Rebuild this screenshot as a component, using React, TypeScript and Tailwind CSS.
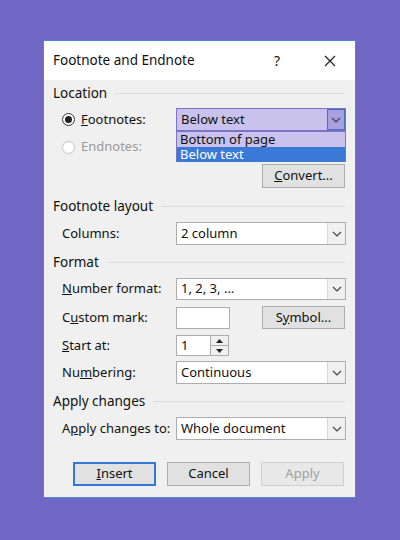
import React from 'react';

const font = { fontFamily: '"Noto Sans", "Open Sans", sans-serif' };

function Chevron() {
  return (
    <svg width="10" height="6" viewBox="0 0 10 6" fill="none" stroke="#444" strokeWidth="1.2">
      <path d="M1 1l4 4 4-4" />
    </svg>
  );
}

function Select({ value, active }: { value: string; active?: boolean }) {
  return (
    <div
      className={`w-[170px] shrink-0 h-full flex items-center border ${
        active ? 'bg-[#c9c2ec] border-[#7e72c8]' : 'bg-white border-[#adadad]'
      }`}
    >
      <span className="flex-1 pl-[4px] text-[13px] text-[#111]">{value}</span>
      <div
        className={`w-[18px] h-full flex items-center justify-center border-l ${
          active ? 'bg-[#a89ee0] border-[#4a6fc0] border' : 'bg-[#f0f0f0] border-[#d6d6d6]'
        }`}
      >
        <Chevron />
      </div>
    </div>
  );
}

function Btn({ children, primary, disabled }: { children: React.ReactNode; primary?: boolean; disabled?: boolean }) {
  return (
    <div
      className={`w-[83px] shrink-0 h-full flex items-center justify-center text-[13px] ${
        primary ? 'border-2 border-[#2f7ad8] bg-[#e1e1e1]' : 'border border-[#adadad] bg-[#e1e1e1]'
      } ${disabled ? 'text-[#a0a0a0] bg-[#e8e8e8] border-[#cfcfcf]' : 'text-[#111]'}`}
    >
      {children}
    </div>
  );
}

function Header({ text, mt }: { text: string; mt: string }) {
  return (
    <div className={`${mt} h-[18px] flex items-center gap-2 text-[13.5px] text-[#111]`}>
      <span>{text}</span>
      <div className="flex-1 h-px bg-[#dcdcdc]" />
    </div>
  );
}

function Label({ children }: { children: React.ReactNode }) {
  return <div className="w-[123px] shrink-0 whitespace-nowrap pl-[9px] text-[13px] text-[#111]">{children}</div>;
}

export default function App() {
  return (
    <div className="w-[400px] h-[540px] bg-[#7066c4] pt-[40px] pl-[43px]" style={font}>
      <div className="w-[313px] h-[458px] bg-[#f0f0f0] border border-[#4f86d2] flex flex-col">
        {/* Title bar */}
        <div className="h-[39px] bg-white flex items-center pl-[9px] text-[13.5px] text-[#111]">
          <span className="flex-1">Footnote and Endnote</span>
          <span className="w-[50px] text-[14px]">?</span>
          <svg width="12" height="12" viewBox="0 0 12 12" stroke="#222" strokeWidth="1.2" className="mr-[19px]">
            <path d="M1 1l10 10M11 1L1 11" />
          </svg>
        </div>

        <div className="flex flex-col pl-[9px] pr-[10px]">
          <Header text="Location" mt="mt-[4px]" />

          <div className="relative mt-[6px] h-[23px] flex items-center">
            <div className="w-[123px] shrink-0 pl-[9px] flex items-center gap-[6px] text-[13px] text-[#111]">
              <span className="w-[13px] h-[13px] rounded-full border border-[#333] bg-white flex items-center justify-center">
                <span className="w-[7px] h-[7px] rounded-full bg-[#222]" />
              </span>
              <span><u>F</u>ootnotes:</span>
            </div>
            <Select value="Below text" active />
            <div className="absolute left-[123px] top-[23px] w-[170px] h-[31px] border border-[#7e72c8] bg-[#c9c2ec] z-10 flex flex-col text-[13px] leading-[15px]">
              <div className="pl-[3px] h-[15px] text-[#111]">Bottom of page</div>
              <div className="pl-[3px] h-[15px] bg-[#3a7ad6] text-white">Below text</div>
            </div>
          </div>

          <div className="mt-[5px] h-[22px] flex items-center pl-[9px] gap-[6px] text-[13px] text-[#9a9a9a]">
            <span className="w-[13px] h-[13px] rounded-full border border-[#c4c4c4] bg-white" />
            <span>Endnotes:</span>
          </div>

          <div className="mt-[6px] h-[24px] flex justify-end">
            <Btn><u>C</u>onvert...</Btn>
          </div>

          <Header text="Footnote layout" mt="mt-[9px]" />
          <div className="mt-[7px] h-[23px] flex items-center">
            <Label>Columns:</Label>
            <Select value="2 column" />
          </div>

          <Header text="Format" mt="mt-[8px]" />
          <div className="mt-[7px] h-[22px] flex items-center">
            <Label><u>N</u>umber format:</Label>
            <Select value="1, 2, 3, ..." />
          </div>
          <div className="mt-[6px] h-[23px] flex items-center">
            <Label>C<u>u</u>stom mark:</Label>
            <div className="w-[54px] h-[22px] bg-white border border-[#adadad]" />
            <div className="flex-1" />
            <Btn>S<u>y</u>mbol...</Btn>
          </div>
          <div className="mt-[6px] h-[21px] flex items-center">
            <Label><u>S</u>tart at:</Label>
            <div className="w-[53px] h-full bg-white border border-[#adadad] flex">
              <span className="flex-1 pl-[4px] text-[13px] text-[#111]">1</span>
              <div className="w-[18px] flex flex-col border-l border-[#adadad] bg-[#f0f0f0]">
                <div className="flex-1 flex items-center justify-center border-b border-[#adadad]">
                  <svg width="7" height="4" viewBox="0 0 7 4"><path d="M0 4L3.5 0 7 4z" fill="#222" /></svg>
                </div>
                <div className="flex-1 flex items-center justify-center">
                  <svg width="7" height="4" viewBox="0 0 7 4"><path d="M0 0L3.5 4 7 0z" fill="#222" /></svg>
                </div>
              </div>
            </div>
          </div>
          <div className="mt-[5px] h-[23px] flex items-center">
            <Label>Nu<u>m</u>bering:</Label>
            <Select value="Continuous" />
          </div>

          <Header text="Apply changes" mt="mt-[8px]" />
          <div className="mt-[7px] h-[23px] flex items-center">
            <Label>A<u>p</u>ply changes to:</Label>
            <Select value="Whole document" />
          </div>

          <div className="mt-[22px] h-[24px] flex items-center pl-[20px] gap-[11px]">
            <Btn primary><u>I</u>nsert</Btn>
            <Btn>Cancel</Btn>
            <Btn disabled>Apply</Btn>
          </div>
        </div>
      </div>
    </div>
  );
}
